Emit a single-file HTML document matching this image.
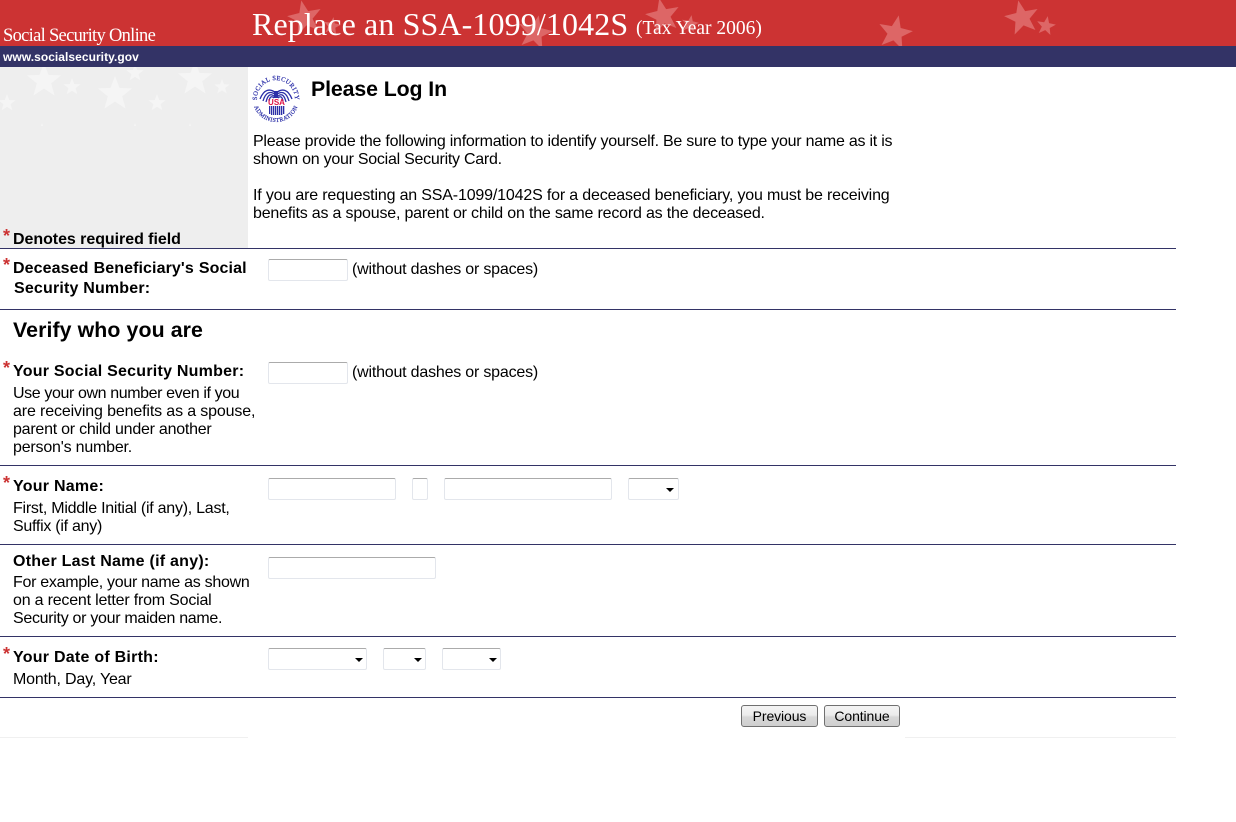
<!DOCTYPE html>
<html lang="en">
<head>
<meta charset="utf-8">
<title>Replace an SSA-1099/1042S</title>
<style>
html,body{margin:0;padding:0;background:#fff}
body{position:relative;width:1236px;height:822px;overflow:hidden;font-family:"Liberation Sans",Arial,sans-serif;font-size:16px;line-height:18px;color:#000}
.a{position:absolute;white-space:nowrap}
.b{font-weight:bold}
.l{letter-spacing:.25px}
.hr{position:absolute;left:0;width:1176px;height:1px;background:#333366}
.req{position:absolute;color:#cc3333;font-size:18px;line-height:22px;font-weight:bold;left:3px}
.f{position:absolute;box-sizing:border-box;height:22px;margin:0;padding:0;background:#fff;border:1px solid #e3e6ec;border-top-color:#ababab;border-radius:2px;outline:none}
.tri{position:absolute;width:0;height:0;border-left:4px solid transparent;border-right:4px solid transparent;border-top:4px solid #000}
.btn{position:absolute;box-sizing:border-box;height:22px;top:705px;margin:0;padding:0;border:1px solid #707070;border-radius:3px;background:linear-gradient(#f4f4f4 0%,#ececec 45%,#d8d8d8 55%,#cfcfcf 100%);font:14px "Liberation Sans",Arial,sans-serif;letter-spacing:-.1px;color:#000;text-align:center}
</style>
</head>
<body>
<svg class="a" style="left:0;top:0" width="1236" height="67">
<defs><polygon id="s" points="0,-1 .25,-.34 .95,-.31 .4,.13 .59,.81 0,.42 -.59,.81 -.4,.13 -.95,-.31 -.25,-.34"/></defs>
<rect width="1236" height="46" fill="#cc3333"/>
<g fill="#dd6666">
<use href="#s" transform="translate(305,18) rotate(-12) scale(18)"/>
<use href="#s" transform="translate(332,26) rotate(10) scale(9)"/>
<use href="#s" transform="translate(535,33) rotate(12) scale(18)"/>
<use href="#s" transform="translate(663,16) rotate(-12) scale(18)"/>
<use href="#s" transform="translate(690,24) rotate(10) scale(9)"/>
<use href="#s" transform="translate(895,33) rotate(12) scale(18)"/>
<use href="#s" transform="translate(1022,18) rotate(-12) scale(18)"/>
<use href="#s" transform="translate(1046,26) rotate(10) scale(10)"/>
</g>
<rect y="46" width="1236" height="21" fill="#333366"/>
</svg>

<div class="a" style="left:3px;top:25px;font:18.5px/22px 'Liberation Serif',serif;color:#fff;letter-spacing:-.7px">Social Security Online</div>
<div class="a" style="left:252px;top:5px;font:32px/38px 'Liberation Serif',serif;color:#fff;letter-spacing:.12px">Replace an SSA-1099/1042S</div>
<div class="a" style="left:636px;top:18px;font:19.5px/22px 'Liberation Serif',serif;color:#fff">(Tax Year 2006)</div>
<div class="a b" style="left:3px;top:48px;font-size:12px;line-height:18px;color:#fff;letter-spacing:.05px">www.socialsecurity.gov</div>

<svg class="a" style="left:0;top:67px" width="248" height="181">
<rect width="248" height="181" fill="#eeeeee"/>
<clipPath id="c"><rect width="248" height="59"/></clipPath>
<g fill="#f5f5f5" clip-path="url(#c)">
<use href="#s" transform="translate(44,14) scale(18)"/>
<use href="#s" transform="translate(72,20) scale(9)"/>
<use href="#s" transform="translate(115,27) scale(18)"/>
<use href="#s" transform="translate(135,6) scale(9)"/>
<use href="#s" transform="translate(157,36) scale(9)"/>
<use href="#s" transform="translate(195,12) scale(18)"/>
<use href="#s" transform="translate(222,20) scale(8)"/>
<use href="#s" transform="translate(7,36) scale(9)"/>
<use href="#s" transform="translate(42,70) scale(14)"/>
<use href="#s" transform="translate(135,62) scale(6)"/>
<use href="#s" transform="translate(190,70) scale(14)"/>
</g>
</svg>

<svg class="a" style="left:252px;top:75px" width="50" height="50" viewBox="0 0 50 50">
<defs>
<path id="t1" d="M7.500,33.500 A19,19 0 1 1 40.500,33.500"/>
<path id="t2" d="M1,24 A23,23 0 0 0 47,24"/>
</defs>
<g fill="#2b2fa8" stroke="#2b2fa8" stroke-width=".22">
<text font-family="Liberation Serif,serif" font-size="6.4" letter-spacing=".4"><textPath href="#t1" startOffset="50%" text-anchor="middle">SOCIAL SECURITY</textPath></text>
<text font-family="Liberation Serif,serif" font-size="5.9" letter-spacing=".42"><textPath href="#t2" startOffset="50%" text-anchor="middle">ADMINISTRATION</textPath></text>
</g>
<g fill="none" stroke="#2b2fa8" stroke-width="1.300">
<path d="M24,18 C18,13 12,14 8,24"/><path d="M24,20 C19,16 14,16 11,26"/><path d="M23,22 C19,18 16,19 14,27"/><path d="M22,23 C20,21 18,21 17,26"/>
<path d="M24,18 C30,13 36,14 40,24"/><path d="M24,20 C29,16 34,16 37,26"/><path d="M25,22 C29,18 32,19 34,27"/><path d="M26,23 C28,21 30,21 31,26"/>
</g>
<path d="M22,16h4v7h-4z" fill="#2b2fa8"/>
<text x="24.500" y="30" text-anchor="middle" font-family="Liberation Sans,sans-serif" font-weight="bold" font-size="8" fill="#dd1144">USA</text>
<g fill="#2b2fa8"><rect x="17" y="31" width="1.300" height="8"/><rect x="19" y="31" width="1.300" height="9"/><rect x="21" y="31" width="1.300" height="9"/><rect x="23" y="31" width="1.300" height="9"/><rect x="25" y="31" width="1.300" height="9"/><rect x="27" y="31" width="1.300" height="9"/><rect x="29" y="31" width="1.300" height="9"/><rect x="31" y="31" width="1.300" height="8"/></g>
</svg>

<div class="a b" style="left:311px;top:77px;font-size:21.3px;line-height:24px;letter-spacing:-.1px">Please Log In</div>
<div class="a" style="left:253px;top:133px"><span style="letter-spacing:-.24px">Please provide the following information to identify yourself. Be sure to type your name as it is</span><br><span style="letter-spacing:-.26px">shown on your Social Security Card.</span><br><br><span style="letter-spacing:-.17px">If you are requesting an SSA-1099/1042S for a deceased beneficiary, you must be receiving</span><br><span style="letter-spacing:-.19px">benefits as a spouse, parent or child on the same record as the deceased.</span></div>

<div class="req" style="top:225px">*</div>
<div class="a b" style="left:13px;top:231px;letter-spacing:-.05px">Denotes required field</div>
<div class="hr" style="top:248px"></div>

<div class="req" style="top:254px">*</div>
<div class="a b" style="left:14px;top:259px;line-height:20px"><span style="margin-left:-1px;letter-spacing:.1px;word-spacing:.5px">Deceased Beneficiary's Social</span><br><span style="letter-spacing:.18px">Security Number:</span></div>
<input class="f" style="left:268px;top:259px;width:80px" type="text" aria-label="Deceased Beneficiary's Social Security Number">
<div class="a" style="left:352px;top:261px;letter-spacing:-.2px">(without dashes or spaces)</div>
<div class="hr" style="top:309px"></div>

<div class="a b" style="left:13px;top:318px;font-size:21.3px;line-height:24px;letter-spacing:.1px">Verify who you are</div>

<div class="req" style="top:357px">*</div>
<div class="a b l" style="left:13px;top:363px;word-spacing:-.1px">Your Social Security Number:</div>
<div class="a" style="left:13px;top:385px"><span style="letter-spacing:-.39px">Use your own number even if you</span><br><span style="letter-spacing:-.14px">are receiving benefits as a spouse,</span><br><span style="letter-spacing:-.24px">parent or child under another</span><br><span style="letter-spacing:-.2px">person's number.</span></div>
<input class="f" style="left:268px;top:362px;width:80px" type="text" aria-label="Your Social Security Number">
<div class="a" style="left:352px;top:364px;letter-spacing:-.2px">(without dashes or spaces)</div>
<div class="hr" style="top:465px"></div>

<div class="req" style="top:472px">*</div>
<div class="a b l" style="left:13px;top:478px">Your Name:</div>
<div class="a" style="left:13px;top:500px"><span style="letter-spacing:-.25px">First, Middle Initial (if any), Last,</span><br><span style="letter-spacing:-.27px">Suffix (if any)</span></div>
<input class="f" style="left:268px;top:478px;width:128px" type="text" aria-label="First name">
<input class="f" style="left:412px;top:478px;width:16px" type="text" aria-label="Middle initial">
<input class="f" style="left:444px;top:478px;width:168px" type="text" aria-label="Last name">
<div class="f" style="left:628px;top:478px;width:51px"></div><div class="tri" style="left:666px;top:488px"></div>
<div class="hr" style="top:544px"></div>

<div class="a b l" style="left:13px;top:553px">Other Last Name (if any):</div>
<div class="a" style="left:13px;top:574px"><span style="letter-spacing:-.29px">For example, your name as shown</span><br><span style="letter-spacing:-.2px">on a recent letter from Social</span><br><span style="letter-spacing:-.3px">Security or your maiden name.</span></div>
<input class="f" style="left:268px;top:557px;width:168px" type="text" aria-label="Other last name">
<div class="hr" style="top:636px"></div>

<div class="req" style="top:643px">*</div>
<div class="a b l" style="left:13px;top:649px">Your Date of Birth:</div>
<div class="a" style="left:13px;top:671px;letter-spacing:-.19px">Month, Day, Year</div>
<div class="f" style="left:268px;top:648px;width:99px"></div><div class="tri" style="left:355px;top:658px"></div>
<div class="f" style="left:383px;top:648px;width:43px"></div><div class="tri" style="left:414px;top:658px"></div>
<div class="f" style="left:442px;top:648px;width:59px"></div><div class="tri" style="left:489px;top:658px"></div>
<div class="hr" style="top:697px"></div>

<button class="btn" style="left:741px;width:77px" type="button">Previous</button>
<button class="btn" style="left:824px;width:76px" type="button">Continue</button>

<div class="a" style="left:0;top:737px;width:248px;height:1px;background:#f0f0f0"></div>
<div class="a" style="left:905px;top:737px;width:271px;height:1px;background:#f0f0f0"></div>
</body>
</html>
